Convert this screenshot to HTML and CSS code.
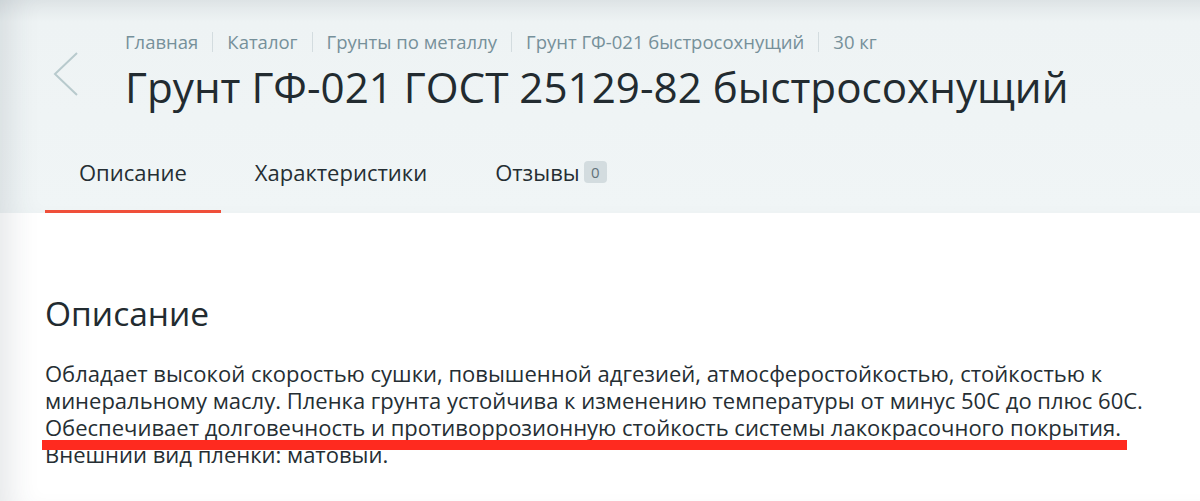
FILE: index.html
```html
<!DOCTYPE html>
<html lang="ru">
<head>
    <meta charset="UTF-8">
    <title>Грунт ГФ-021 ГОСТ 25129-82 быстросохнущий</title>
    <link rel="stylesheet" href="styles.css">
</head>
<body>
    <div class="page">
        <div class="header">
            <div class="head-row">
                <a class="back" href="#">
                    <svg width="26" height="44" viewBox="0 0 26 44">
                        <path d="M24 1 L2 22 L24 43" fill="none" stroke="#b8cacd" stroke-width="2"/>
                    </svg>
                </a>
                <div class="head-text">
                    <div class="crumbs">
                        <a href="#">Главная</a>
                        <a href="#">Каталог</a>
                        <a href="#">Грунты по металлу</a>
                        <a href="#">Грунт ГФ-021 быстросохнущий</a>
                        <span>30 кг</span>
                    </div>
                    <h1 class="title">Грунт ГФ-021 ГОСТ 25129-82 быстросохнущий</h1>
                </div>
            </div>
            <div class="tabs">
                <a class="tab active" href="#">Описание</a>
                <a class="tab" href="#">Характеристики</a>
                <a class="tab" href="#">Отзывы <span class="badge">0</span></a>
            </div>
        </div>

        <div class="content">
            <h2>Описание</h2>
            <p class="desc">Обладает высокой скоростью сушки, повышенной адгезией, атмосферостойкостью, стойкостью к минеральному маслу. Пленка грунта устойчива к изменению температуры от минус 50С до плюс 60С. Обеспечивает долговечность и противоррозионную стойкость системы лакокрасочного покрытия. Внешний вид пленки: матовый.</p>
            <div class="mark"></div>
        </div>
    </div>
</body>
</html>
```

FILE: styles.css
```css
body{
    margin: 0;
    padding: 0;
    background-color: white;
    color: #252e33;
    font-family: "Open Sans", "DejaVu Sans", sans-serif;
}
a{
    color: inherit;
    text-decoration: none;
}
.page{
    position: relative;
    min-height: 501px;
    box-shadow: inset 30px 0 30px -20px rgba(40, 60, 70, 0.12);
}
.header{
    background: linear-gradient(to bottom, #dfe5e7 0px, #eef3f4 22px, #f0f5f6 100%);
    box-shadow: inset 30px 0 30px -20px rgba(40, 60, 70, 0.12);
}
.head-row{
    display: flex;
    padding-top: 27px;
}
.back{
    width: 125px;
    display: flex;
    align-items: center;
    padding-left: 53px;
    box-sizing: border-box;
    padding-top: 6px;
}
.crumbs{
    display: flex;
    font-size: 18.5px;
    line-height: 30px;
    color: #76909a;
}
.crumbs a,
.crumbs span{
    padding: 0 14px;
    border-left: 1px solid #d3dcdf;
    line-height: 20px;
    margin: 5px 0;
}
.crumbs a:first-child{
    padding-left: 0;
    border-left: none;
}
.title{
    margin: 3px 0 0;
    font-size: 42.2px;
    font-weight: 400;
    line-height: 54px;
    color: #222b30;
}
.tabs{
    display: flex;
    padding-left: 45px;
    margin-top: 19px;
}
.tab{
    display: flex;
    align-items: center;
    height: 80px;
    padding: 0 34px;
    font-size: 22px;
    color: #252e33;
    border-bottom: 3px solid transparent;
    box-sizing: border-box;
}
.tab.active{
    border-bottom-color: #ef4f3a;
}
.badge{
    display: inline-block;
    margin-left: 4px;
    width: 23px;
    height: 22px;
    line-height: 22px;
    text-align: center;
    border-radius: 4px;
    background-color: #d3dcdf;
    color: #62737b;
    font-size: 15px;
}
.content{
    padding: 0 45px;
}
.content h2{
    margin: 80px 0 0;
    font-size: 33.5px;
    font-weight: 400;
    line-height: 40px;
    color: #222b30;
}
.desc{
    margin: 27px 0 0;
    width: 1110px;
    font-size: 22px;
    line-height: 27px;
}
/* красная линия поверх текста */
.mark{
    position: absolute;
    left: 42px;
    top: 440px;
    width: 1085px;
    height: 10px;
    background-color: #ff2a1f;
}
```
